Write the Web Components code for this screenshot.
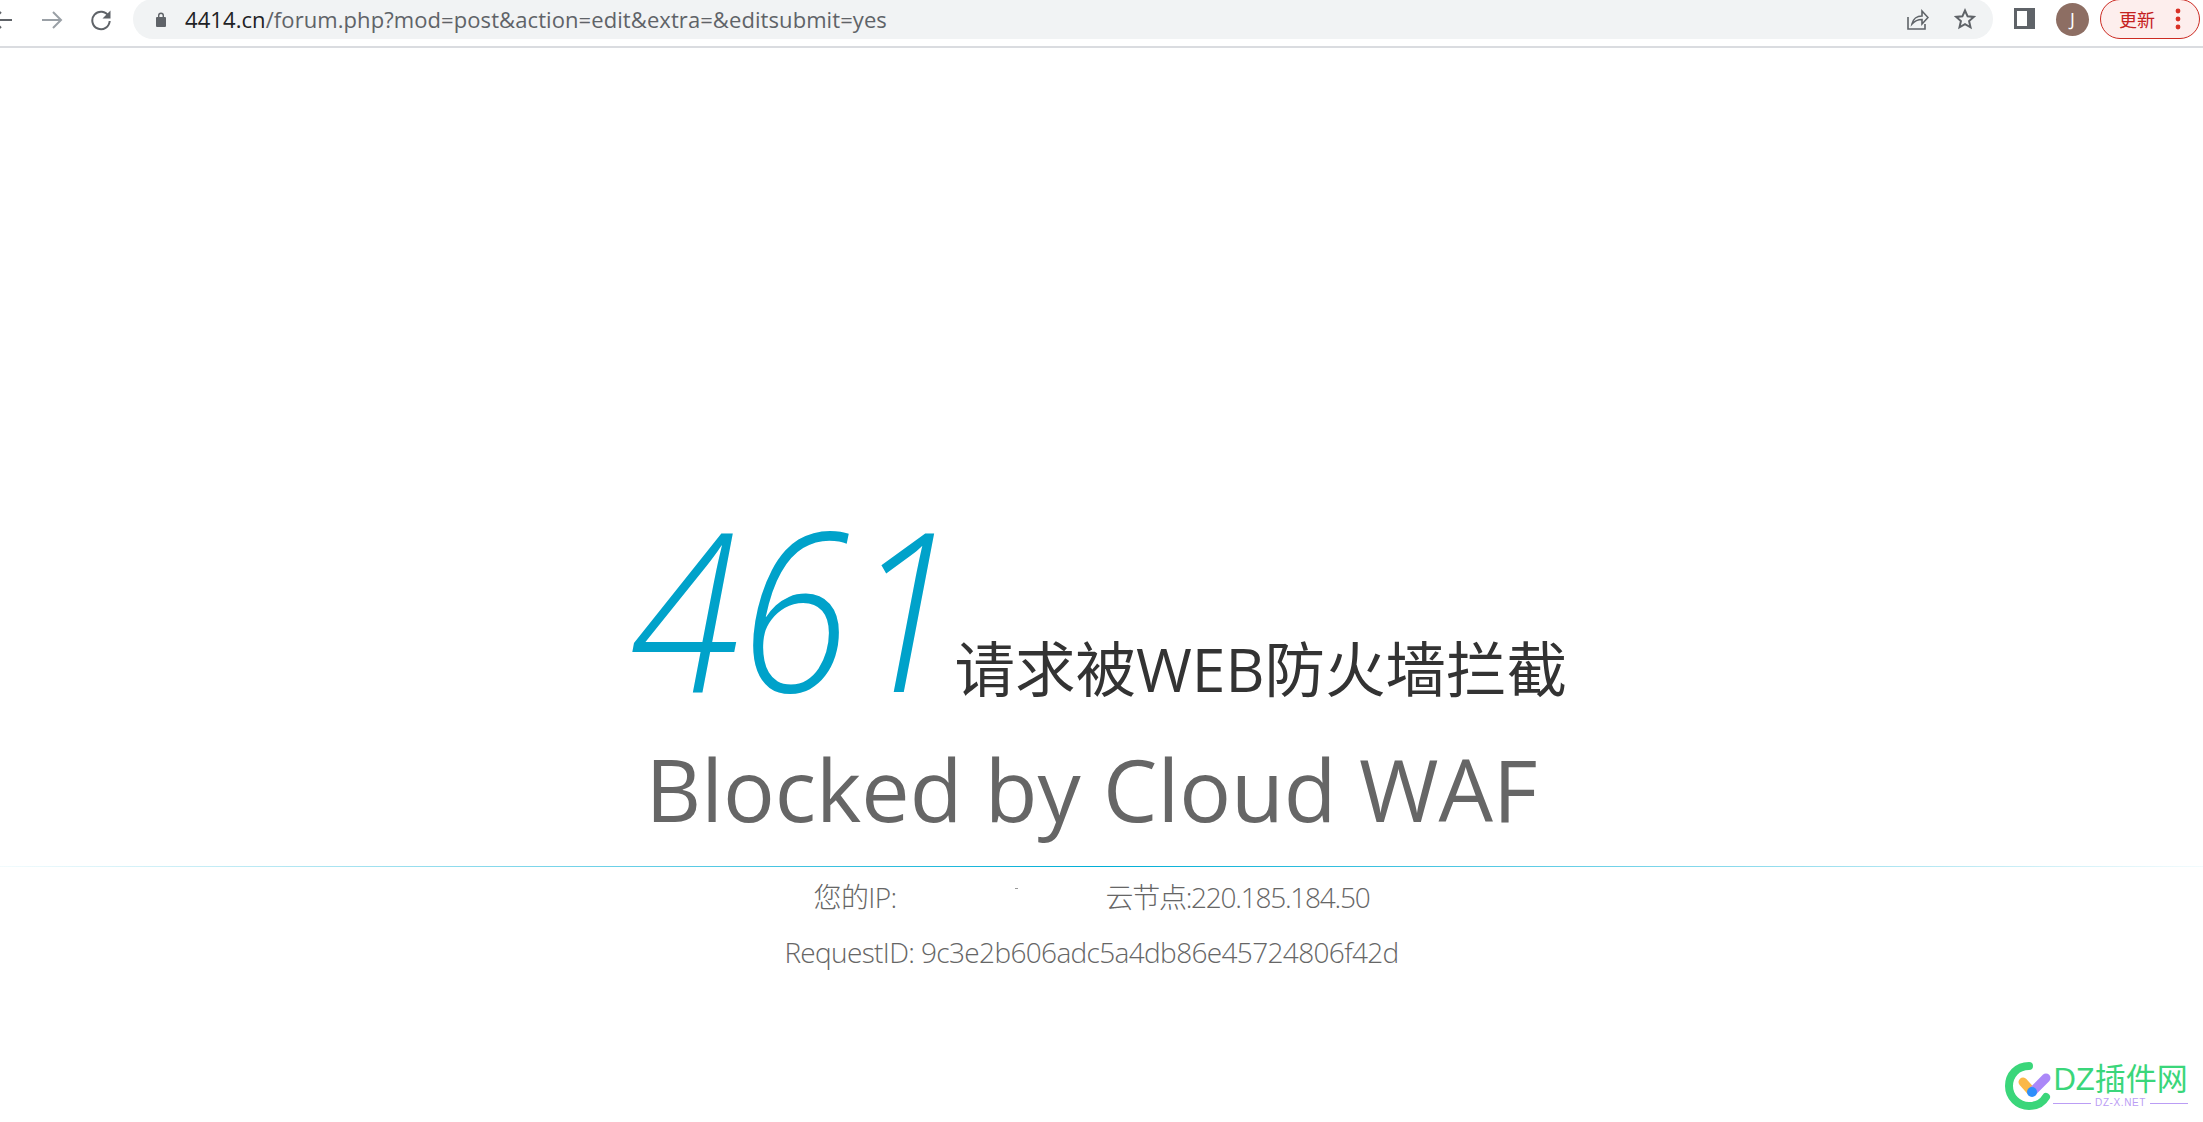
<!DOCTYPE html>
<html lang="zh-CN">
<head>
<meta charset="utf-8">
<title>461</title>
<style>
    html, body { margin: 0; height: 100%; background: #fff; }
    body { display: flex; flex-direction: column; overflow: hidden; }
</style>
</head>
<body>
<browser-toolbar url-host="4414.cn" url-path="/forum.php?mod=post&amp;action=edit&amp;extra=&amp;editsubmit=yes"></browser-toolbar>
<waf-page>
    <span slot="code">461</span>
    <span slot="title">请求被WEB防火墙拦截</span>
    <span slot="subtitle">Blocked by Cloud WAF</span>
    <info-row slot="info">
        <span>您的IP:</span>
        <span class="mask"></span>
        <span class="node">云节点:220.185.184.50</span>
    </info-row>
    <info-row slot="info">RequestID: 9c3e2b606adc5a4db86e45724806f42d</info-row>
</waf-page>
<dz-watermark></dz-watermark>

<script>
const toolbarTemplate = document.createElement('template');
toolbarTemplate.innerHTML = `
    <style>
        :host {
            display: flex;
            flex: none;
            align-items: flex-start;
            height: 46px;
            padding-right: 3px;
            border-bottom: 2px solid #dadce0;
            background: #fff;
            font-family: "Open Sans", "Noto Sans CJK SC", sans-serif;
        }
        svg { display: block; flex: none; }
        .back { margin: 9px 0 0 -9px; }
        .forward { margin: 9px 0 0 28px; }
        .reload { margin: 9px 0 0 27px; }
        .omnibox {
            flex: 1;
            display: flex;
            align-items: center;
            height: 40px;
            margin: -1px 0 0 21px;
            padding: 0 17px 0 23px;
            box-sizing: border-box;
            background: #f1f3f4;
            border-radius: 20px;
        }
        .url {
            margin-left: 19px;
            font-size: 22px;
            letter-spacing: 0.08px;
            color: #5f6368;
            white-space: nowrap;
        }
        .host { color: #202124; }
        .spacer { flex: 1; }
        .panel { margin: 8px 0 0 21px; }
        .avatar {
            flex: none;
            width: 33px;
            height: 33px;
            margin: 3px 0 0 21px;
            border-radius: 50%;
            background: #8d6e63;
            color: #fff;
            font-size: 18px;
            line-height: 33px;
            text-align: center;
        }
        .update {
            flex: none;
            display: flex;
            align-items: center;
            box-sizing: border-box;
            width: 100px;
            height: 40px;
            margin: -1px 0 0 11px;
            padding-left: 18px;
            border: 1.5px solid #cc2b23;
            border-radius: 20px;
            background: #fdeeed;
            color: #c5221f;
            font-size: 18px;
        }
        .update svg { margin-left: 20px; }
    </style>
    <svg class="back" width="22" height="22" viewBox="0 0 22 22" fill="none" stroke="#5f6368" stroke-width="2"><path d="M21 11H2M10 3l-8 8 8 8"/></svg>
    <svg class="forward" width="22" height="22" viewBox="0 0 22 22" fill="none" stroke="#9aa0a6" stroke-width="2"><path d="M1 11h19M12 3l8 8-8 8"/></svg>
    <svg class="reload" width="22" height="22" viewBox="0 0 22 22" fill="none"><path d="M18.6 7.2A8.7 8.7 0 1 0 19.7 12" stroke="#5f6368" stroke-width="2"/><path d="M20.5 1.5v8h-8z" fill="#5f6368"/></svg>
    <div class="omnibox">
        <svg width="10" height="16" viewBox="0 0 10 16"><path d="M2 6V4.500a3 3 0 0 1 6 0V6h1a1 1 0 0 1 1 1v8a1 1 0 0 1-1 1H1a1 1 0 0 1-1-1V7a1 1 0 0 1 1-1zM3.400 6h3.200V4.500a1.600 1.600 0 0 0-3.200 0z" fill="#5f6368" fill-rule="evenodd"/></svg>
        <span class="url"><span class="host"></span><span class="path"></span></span>
        <span class="spacer"></span>
        <svg width="22" height="22" viewBox="0 0 22 22" fill="none" stroke="#5f6368" stroke-width="1.6"><path d="M1 9v12h17v-5"/><path d="M5 16c1-5 5-8 10-8V3l6 6.500-6 6.500v-4.500c-4 0-7 1-10 4.500z"/></svg>
        <svg style="margin-left:25px" width="22" height="22" viewBox="0 0 22 22" fill="none" stroke="#5f6368" stroke-width="2"><path d="M11 2.500l2.600 5.800 6.200.6-4.700 4.200 1.400 6.200L11 16.100l-5.500 3.200 1.400-6.200-4.700-4.200 6.200-.6z"/></svg>
    </div>
    <svg class="panel" width="21" height="21" viewBox="0 0 21 21"><path d="M0 0h21v21H0zM3 3v15h10V3z" fill="#5f6368" fill-rule="evenodd"/></svg>
    <div class="avatar">J</div>
    <div class="update">更新
        <svg width="6" height="22" viewBox="0 0 6 22" fill="#d93025"><circle cx="3" cy="3" r="2.400"/><circle cx="3" cy="11" r="2.400"/><circle cx="3" cy="19" r="2.400"/></svg>
    </div>
`;

class BrowserToolbar extends HTMLElement {
    constructor() {
        super();
        this.attachShadow({ mode: 'open' });
        this.shadowRoot.appendChild(toolbarTemplate.content.cloneNode(true));
    }

    connectedCallback() {
        this.shadowRoot.querySelector('.host').textContent = this.getAttribute('url-host');
        this.shadowRoot.querySelector('.path').textContent = this.getAttribute('url-path');
    }
}

const pageTemplate = document.createElement('template');
pageTemplate.innerHTML = `
    <style>
        :host {
            display: block;
            flex: 1;
            padding-top: 463px;
            font-family: "Open Sans", "Noto Sans CJK SC", sans-serif;
            text-align: center;
        }
        .centered { padding-right: 20px; }
        .headline {
            display: flex;
            justify-content: center;
            align-items: baseline;
            height: 190px;
            white-space: nowrap;
            padding-left: 14px;
        }
        .code {
            display: inline-block;
            font-size: 222px;
            line-height: 190px;
            font-style: italic;
            font-weight: 300;
            color: #00a2ca;
            transform: scaleX(.9);
            transform-origin: 0 0;
            margin-right: -54px;
        }
        .title {
            margin-left: 12px;
            font-size: 60.500px;
            color: #333;
        }
        .subtitle {
            margin-top: 35px;
            height: 105px;
            font-size: 86.200px;
            line-height: 105px;
            color: #666;
            white-space: nowrap;
        }
        .rule {
            height: 1px;
            margin-top: 25px;
            background: linear-gradient(to right, rgba(0, 174, 214, .05), #00aed6 50%, rgba(0, 174, 214, .05));
        }
        .info {
            display: flex;
            flex-direction: column;
            gap: 19px;
            margin-top: 12px;
        }
    </style>
    <div class="centered">
        <div class="headline">
            <span class="code"><slot name="code"></slot></span>
            <span class="title"><slot name="title"></slot></span>
        </div>
        <div class="subtitle"><slot name="subtitle"></slot></div>
    </div>
    <div class="rule"></div>
    <div class="info centered"><slot name="info"></slot></div>
`;

class WafPage extends HTMLElement {
    constructor() {
        super();
        this.attachShadow({ mode: 'open' });
        this.shadowRoot.appendChild(pageTemplate.content.cloneNode(true));
    }
}

const infoTemplate = document.createElement('template');
infoTemplate.innerHTML = `
    <style>
        :host {
            display: flex;
            justify-content: center;
            font-size: 28px;
            font-weight: 300;
            line-height: 36px;
            letter-spacing: -0.65px;
            color: #666;
            white-space: nowrap;
        }
        ::slotted(.mask) {
            display: block;
            width: 209px;
            background: linear-gradient(#999, #999) 119px 9px / 3px 1px no-repeat;
        }
        ::slotted(.node) { letter-spacing: -1.25px; }
    </style>
    <slot></slot>
`;

class InfoRow extends HTMLElement {
    constructor() {
        super();
        this.attachShadow({ mode: 'open' });
        this.shadowRoot.appendChild(infoTemplate.content.cloneNode(true));
    }
}

const watermarkTemplate = document.createElement('template');
watermarkTemplate.innerHTML = `
    <style>
        :host {
            position: absolute;
            right: 15px;
            bottom: 11px;
            display: flex;
            align-items: center;
            gap: 0;
            font-family: "Liberation Sans", "Noto Sans CJK SC", sans-serif;
        }
        .words { display: flex; flex-direction: column; align-items: center; }
        .name { font-size: 31px; line-height: 34px; color: #3ad67a; white-space: nowrap; }
        .domain {
            display: flex;
            align-items: center;
            gap: 4px;
            font-size: 10px;
            line-height: 12px;
            letter-spacing: .6px;
            color: #bb9df5;
        }
        .domain i { display: block; width: 38px; height: 1px; background: #bb9df5; }
    </style>
    <svg width="48" height="50" viewBox="0 0 48 50" fill="none">
        <path d="M24 5C12 5 4 14 4 25s9 20 20 20c8 0 14-4 17-9" stroke="#3ad67a" stroke-width="8" stroke-linecap="round"/>
        <path d="M18 21l8 9" stroke="#fbb848" stroke-width="9" stroke-linecap="round"/>
        <path d="M28 30l13-13" stroke="#ab88f8" stroke-width="9" stroke-linecap="round"/>
        <circle cx="27" cy="31" r="5" fill="#2d8ffb"/>
    </svg>
    <div class="words">
        <div class="name">DZ插件网</div>
        <div class="domain"><i></i>DZ-X.NET<i></i></div>
    </div>
`;

class DzWatermark extends HTMLElement {
    constructor() {
        super();
        this.attachShadow({ mode: 'open' });
        this.shadowRoot.appendChild(watermarkTemplate.content.cloneNode(true));
    }
}

window.customElements.define('browser-toolbar', BrowserToolbar);
window.customElements.define('waf-page', WafPage);
window.customElements.define('info-row', InfoRow);
window.customElements.define('dz-watermark', DzWatermark);
</script>
</body>
</html>
